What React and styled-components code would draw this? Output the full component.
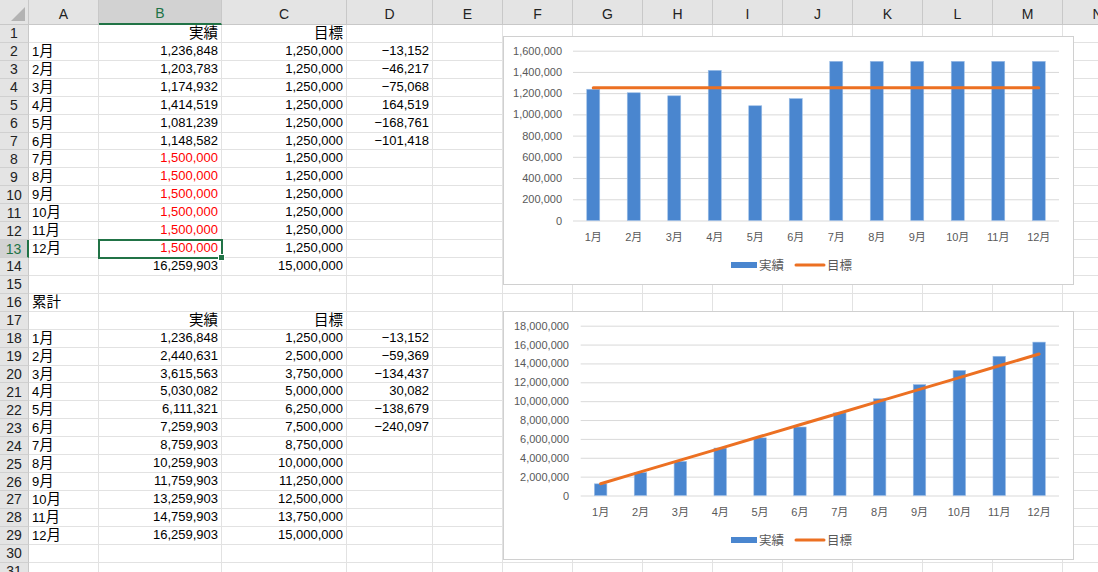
import React from 'react'
import styled, { createGlobalStyle } from 'styled-components'

const ROW_H = 17.93
const FONT = `"Liberation Sans", "Noto Sans CJK JP", sans-serif`

const COLS = [
  { key: 'A', w: 70 },
  { key: 'B', w: 123 },
  { key: 'C', w: 125 },
  { key: 'D', w: 86 },
  ...['E', 'F', 'G', 'H', 'I', 'J', 'K', 'L', 'M', 'N'].map(key => ({ key, w: 70 })),
]

const fmt = n => n.toLocaleString('en-US').replace('-', '−')

const actual = [1236848, 1203783, 1174932, 1414519, 1081239, 1148582, 1500000, 1500000, 1500000, 1500000, 1500000, 1500000]
const target = Array(12).fill(1250000)
const months = actual.map((_, i) => `${i + 1}月`)

const cumulate = arr => arr.reduce((acc, v) => [...acc, (acc[acc.length - 1] || 0) + v], [])
const cumActual = cumulate(actual)
const cumTarget = cumulate(target)

const buildRows = () => {
  const rows = []
  rows.push({ B: '実績', C: '目標' })
  months.forEach((m, i) => {
    rows.push({
      A: m,
      B: fmt(actual[i]),
      C: fmt(target[i]),
      D: i < 6 ? fmt(actual[i] - target[i]) : '',
      red: i >= 6,
    })
  })
  rows.push({ B: fmt(cumActual[11]), C: fmt(cumTarget[11]) })
  rows.push({})
  rows.push({ A: '累計' })
  rows.push({ B: '実績', C: '目標' })
  months.forEach((m, i) => {
    rows.push({
      A: m,
      B: fmt(cumActual[i]),
      C: fmt(cumTarget[i]),
      D: i < 6 ? fmt(cumActual[i] - cumTarget[i]) : '',
    })
  })
  rows.push({})
  rows.push({})
  return rows
}

const ROWS = buildRows()
const SELECTED = { row: 13, col: 'B' }

// japanese glyphs render a bit larger than the digits in the sheet
const renderText = text =>
  String(text)
    .split(/([\u3000-\u9fff]+)/)
    .filter(Boolean)
    .map((part, i) => (/[\u3000-\u9fff]/.test(part) ? <Kanji key={i}>{part}</Kanji> : part))

const Chart = ({ bars, line, max, step, plotLeft, labelRight, barWidth, top }) => {
  const W = 571
  const H = 249
  const plotRight = 556
  const plotTop = 14.7
  const plotBottom = 184.5
  const catW = (plotRight - plotLeft) / bars.length
  const yOf = v => plotBottom - (v / max) * (plotBottom - plotTop)
  const ticks = []
  for (let v = 0; v <= max; v += step) ticks.push(v)
  const cx = i => plotLeft + catW * (i + 0.5)
  const linePts = line.map((v, i) => `${cx(i)},${yOf(v)}`).join(' ')

  return (
    <ChartBox style={{ top }}>
      <svg width={W} height={H} viewBox={`0 0 ${W} ${H}`}>
        {ticks.map(v => (
          <g key={v}>
            <line x1={plotLeft} x2={plotRight} y1={yOf(v) + 0.5} y2={yOf(v) + 0.5} stroke="#d9d9d9" strokeWidth="1" />
            <text x={labelRight} y={yOf(v) + 4} textAnchor="end" fill="#595959" fontSize="11">
              {v.toLocaleString('en-US')}
            </text>
          </g>
        ))}
        {bars.map((v, i) => (
          <rect
            key={i}
            x={cx(i) - barWidth / 2}
            y={yOf(v)}
            width={barWidth}
            height={plotBottom - yOf(v)}
            fill="#4a86cf"
            stroke="#9bbde6"
            strokeWidth="0.6"
          />
        ))}
        <polyline points={linePts} fill="none" stroke="#ec7022" strokeWidth="3" strokeLinecap="round" />
        {months.map((m, i) => (
          <text key={m} x={cx(i)} y={205} textAnchor="middle" fill="#595959" fontSize="11">
            {m}
          </text>
        ))}
        <rect x="228" y="226" width="26" height="6" fill="#4a86cf" />
        <text x="256" y="233.5" fill="#595959" fontSize="12.5">実績</text>
        <line x1="293" x2="321" y1="229" y2="229" stroke="#ec7022" strokeWidth="3" strokeLinecap="round" />
        <text x="324" y="233.5" fill="#595959" fontSize="12.5">目標</text>
      </svg>
    </ChartBox>
  )
}

const App = () => (
  <>
    <GlobalStyle />
    <Sheet>
      <Grid>
        <Corner />
        {COLS.map(c => (
          <ColHead key={c.key} $active={c.key === SELECTED.col}>
            {c.key}
          </ColHead>
        ))}
        {ROWS.map((r, i) => {
          const rowNo = i + 1
          return (
            <React.Fragment key={rowNo}>
              <RowHead $active={rowNo === SELECTED.row}>{rowNo}</RowHead>
              {COLS.map(c => (
                <Cell
                  key={c.key}
                  $align={c.key === 'A' ? 'left' : 'right'}
                  $red={c.key === 'B' && r.red}
                  $selected={rowNo === SELECTED.row && c.key === SELECTED.col}
                >
                  {r[c.key] ? renderText(r[c.key]) : ''}
                </Cell>
              ))}
            </React.Fragment>
          )
        })}
      </Grid>

      <Chart bars={actual} line={target} max={1600000} step={200000} plotLeft={70} labelRight={59} barWidth={13} top={36} />
      <Chart bars={cumActual} line={cumTarget} max={18000000} step={2000000} plotLeft={77.7} labelRight={66} barWidth={12.5} top={311} />
    </Sheet>
  </>
)

export default App

const GlobalStyle = createGlobalStyle`
  html, body {
    margin: 0;
    padding: 0;
    background: #ffffff;
    overflow: hidden;
  }
  body {
    font-family: ${FONT};
  }
`

const Sheet = styled.div`
  position: relative;
  width: 1098px;
  height: 572px;
  overflow: hidden;
`

const Grid = styled.div`
  display: grid;
  grid-template-columns: 29px ${COLS.map(c => `${c.w}px`).join(' ')};
  grid-template-rows: 25px;
  grid-auto-rows: ${ROW_H}px;
  font-size: 13px;
  color: #000;
`

const Kanji = styled.span`
  font-size: 14.5px;
`

const Corner = styled.div`
  position: relative;
  background: #e4e4e4;
  border-right: 1px solid #c8c8c8;
  border-bottom: 1px solid #c8c8c8;
  box-sizing: border-box;

  &::after {
    content: '';
    position: absolute;
    right: 3px;
    bottom: 3px;
    width: 0;
    height: 0;
    border-left: 14px solid transparent;
    border-bottom: 14px solid #b3b3b3;
  }
`

const ColHead = styled.div`
  display: flex;
  align-items: flex-end;
  justify-content: center;
  padding-bottom: 2px;
  box-sizing: border-box;
  font-size: 14px;
  color: ${p => (p.$active ? '#217346' : '#222')};
  background: ${p => (p.$active ? '#d2d2d2' : '#e4e4e4')};
  border-right: 1px solid #c8c8c8;
  border-bottom: ${p => (p.$active ? '2px solid #217346' : '1px solid #c8c8c8')};
`

const RowHead = styled.div`
  display: flex;
  align-items: center;
  justify-content: center;
  box-sizing: border-box;
  font-size: 14px;
  color: ${p => (p.$active ? '#217346' : '#222')};
  background: ${p => (p.$active ? '#d2d2d2' : '#e4e4e4')};
  border-right: ${p => (p.$active ? '2px solid #217346' : '1px solid #c8c8c8')};
  border-bottom: 1px solid #d0d0d0;
`

const Cell = styled.div`
  position: relative;
  box-sizing: border-box;
  padding: 0 3px;
  line-height: ${ROW_H - 1}px;
  white-space: nowrap;
  overflow: visible;
  text-align: ${p => p.$align};
  color: ${p => (p.$red ? '#ff0000' : '#000')};
  border-right: 1px solid #e2e2e2;
  border-bottom: 1px solid #e2e2e2;
  ${p =>
    p.$selected &&
    `
    outline: 2px solid #217346;
    outline-offset: -1px;
    z-index: 1;
    &::after {
      content: '';
      position: absolute;
      right: -4px;
      bottom: -4px;
      width: 5px;
      height: 5px;
      background: #217346;
      border: 1px solid #fff;
    }
  `}
`

const ChartBox = styled.div`
  position: absolute;
  left: 503px;
  width: 571px;
  height: 249px;
  box-sizing: border-box;
  background: #ffffff;
  border: 1px solid #d0d0d0;
  font-family: ${FONT};
  z-index: 2;

  svg {
    display: block;
    margin: -1px;
  }
`
